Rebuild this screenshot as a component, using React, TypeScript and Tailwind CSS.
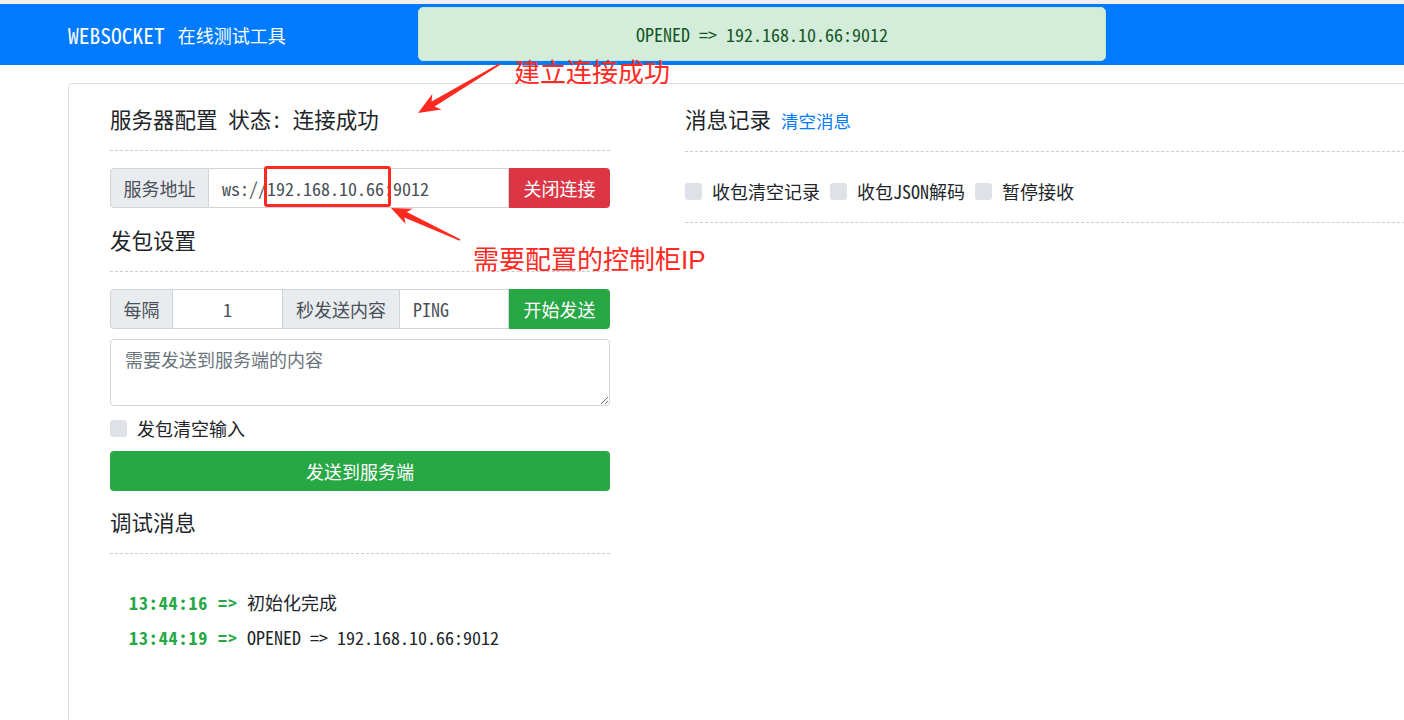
import React from "react";

function arrowPts(
  tx: number,
  ty: number,
  hx: number,
  hy: number,
  headLen: number,
  headHalf: number,
  s0: number,
  s1: number
) {
  const dx = hx - tx;
  const dy = hy - ty;
  const L = Math.hypot(dx, dy);
  const ux = dx / L;
  const uy = dy / L;
  const nx = -uy;
  const ny = ux;
  const bx = hx - ux * headLen;
  const by = hy - uy * headLen;
  const nbx = hx - ux * headLen * 0.8;
  const nby = hy - uy * headLen * 0.8;
  const pts = [
    [tx + nx * s0, ty + ny * s0],
    [nbx + nx * s1, nby + ny * s1],
    [bx + nx * headHalf, by + ny * headHalf],
    [hx, hy],
    [bx - nx * headHalf, by - ny * headHalf],
    [nbx - nx * s1, nby - ny * s1],
    [tx - nx * s0, ty - ny * s0],
  ];
  return pts.map((p) => p.map((v) => v.toFixed(1)).join(",")).join(" ");
}

function Check({ label }: { label: string }) {
  return (
    <div className="flex items-center gap-[10px]">
      <span className="block w-[17px] h-[17px] rounded-[3px] bg-[#dee2e6]" />
      <span className="text-[18px] leading-[24px]">{label}</span>
    </div>
  );
}

function Heading({ children }: { children: React.ReactNode }) {
  return (
    <div className="border-b border-dashed border-[#cccccc] pb-[15px]">
      <h5 className="text-[21.5px] leading-[32px] text-[#212529]">{children}</h5>
    </div>
  );
}

export default function App() {
  return (
    <div className="relative w-[1404px] h-[720px] overflow-hidden bg-white text-[#212529] font-['Noto_Sans_Mono_CJK_SC','Noto_Sans_CJK_SC','Liberation_Mono',monospace]">
      <div className="h-[4px] bg-[#f0f0f0]" />
      <header className="h-[61px] bg-[#007bff] flex items-center pl-[68px] text-white">
        <span className="text-[21.5px] leading-none">WEBSOCKET</span>
        <span className="ml-[13px] text-[18px] leading-none">在线测试工具</span>
      </header>

      <div className="pt-[18px] pl-[68px]">
        <div className="w-[1400px] h-[700px] border border-[#dddddd] rounded-[4px] pl-[41px] pt-[19px] flex gap-[75px]">
          {/* left column */}
          <section className="w-[500px] shrink-0">
            <Heading>服务器配置 状态: 连接成功</Heading>

            <div className="mt-[17px] flex h-[40px] text-[18px] text-[#495057]">
              <span className="w-[99px] flex items-center justify-center bg-[#e9ecef] border border-[#ced4da] rounded-l-[4px]">
                服务地址
              </span>
              <span className="flex-1 flex items-center pl-[13px] border-y border-r border-[#ced4da]">
                ws://192.168.10.66:9012
              </span>
              <button className="w-[101px] bg-[#dc3545] text-white rounded-r-[4px]">关闭连接</button>
            </div>

            <div className="mt-[16px]">
              <Heading>发包设置</Heading>
            </div>

            <div className="mt-[17px] flex h-[40px] text-[18px] text-[#495057]">
              <span className="w-[63px] flex items-center justify-center bg-[#e9ecef] border border-[#ced4da] rounded-l-[4px]">
                每隔
              </span>
              <span className="w-[110px] flex items-center justify-center border-y border-r border-[#ced4da]">
                1
              </span>
              <span className="w-[117px] flex items-center justify-center bg-[#e9ecef] border-y border-r border-[#ced4da]">
                秒发送内容
              </span>
              <span className="flex-1 flex items-center pl-[13px] border-y border-r border-[#ced4da]">
                PING
              </span>
              <button className="w-[101px] bg-[#28a745] text-white rounded-r-[4px]">开始发送</button>
            </div>

            <textarea
              className="mt-[10px] block w-full h-[67px] border border-[#ced4da] rounded-[4px] px-[14px] py-[6px] text-[18px] leading-[26px] text-[#495057] placeholder:text-[#6c757d] outline-none"
              placeholder="需要发送到服务端的内容"
            />

            <div className="mt-[10px] h-[24px] flex items-center">
              <Check label="发包清空输入" />
            </div>

            <button className="mt-[11px] block w-full h-[40px] bg-[#28a745] text-white rounded-[4px] text-[18px]">
              发送到服务端
            </button>

            <div className="mt-[15px]">
              <Heading>调试消息</Heading>
            </div>

            <div className="mt-[31px] pl-[19px] text-[18px] leading-[35px]">
              <div>
                <span className="font-bold text-[#28a745] tracking-[0.9px]">13:44:16 =&gt;</span>{" "}
                <span>初始化完成</span>
              </div>
              <div>
                <span className="font-bold text-[#28a745] tracking-[0.9px]">13:44:19 =&gt;</span>{" "}
                <span>OPENED =&gt; 192.168.10.66:9012</span>
              </div>
            </div>
          </section>

          {/* right column */}
          <section className="w-[800px] shrink-0">
            <div className="border-b border-dashed border-[#cccccc] pb-[16px] flex items-baseline gap-[10px]">
              <h5 className="text-[21.5px] leading-[32px]">消息记录</h5>
              <a className="text-[#007bff] text-[17.5px]">清空消息</a>
            </div>
            <div className="border-b border-dashed border-[#cccccc] pt-[27px] pb-[19px] flex items-center gap-[10px]">
              <Check label="收包清空记录" />
              <Check label="收包JSON解码" />
              <Check label="暂停接收" />
            </div>
          </section>
        </div>
      </div>

      {/* toast */}
      <div className="absolute left-[418px] top-[7px] w-[688px] h-[54px] bg-[#d4edda] border border-[#c3e6cb] rounded-[5px] flex items-center justify-center text-[#155724] text-[18px]">
        OPENED =&gt; 192.168.10.66:9012
      </div>

      {/* annotations */}
      <div className="absolute left-[264px] top-[166px] w-[127px] h-[41px] border-[3px] border-[#ff2a1f] rounded-[3px]" />
      <svg className="absolute left-0 top-0 pointer-events-none" width="1404" height="720">
        <polygon points={arrowPts(500, 64, 418, 113, 22, 9, 0.8, 3)} fill="#ff2a1f" />
        <polygon points={arrowPts(460, 240, 391, 208, 20, 8.5, 0.8, 3)} fill="#ff2a1f" />
      </svg>
      <div className="absolute left-[514px] top-[60px] text-[26px] leading-none text-[#ff2a1f] font-['Liberation_Sans','Noto_Sans_CJK_SC',sans-serif]">
        建立连接成功
      </div>
      <div className="absolute left-[473px] top-[247px] text-[26px] leading-none text-[#ff2a1f] font-['Liberation_Sans','Noto_Sans_CJK_SC',sans-serif]">
        需要配置的控制柜IP
      </div>
    </div>
  );
}
